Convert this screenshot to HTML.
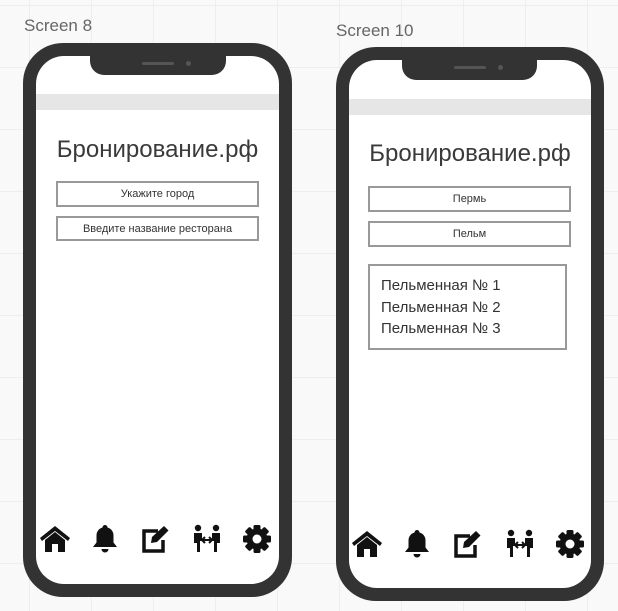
<!DOCTYPE html>
<html><head><meta charset="utf-8"><style>
body{margin:0;width:618px;height:611px;overflow:hidden;background:#f9f9f9;position:relative;font-family:"Liberation Sans","Noto Sans CJK SC",sans-serif;
background-image:linear-gradient(#eeeeee 1px,transparent 1px),linear-gradient(90deg,#eeeeee 1px,transparent 1px);background-size:62px 62px;background-position:29px 5px}
.lbl{position:absolute;font-size:17px;color:#666}
.ph{position:absolute;background:#333;border-radius:40px}
.sc{position:absolute;background:#fff;border-radius:28px;overflow:hidden}
.notch{position:absolute;background:#333;border-radius:0 0 14px 14px;top:0}
.bar{position:absolute;left:0;right:0;height:16px;background:#e6e6e6}
.t{position:absolute;left:0;right:0;text-align:center;font-size:24px;color:#3a3a3a}
.b{position:absolute;border:2px solid #999;box-sizing:border-box;font-size:11px;color:#333;text-align:center;line-height:22px}
.lst{position:absolute;border:2px solid #999;box-sizing:border-box;font-size:15px;color:#333;padding:9px 0 0 11px;line-height:21.5px}
.ic{position:absolute;width:32px;height:32px}
</style></head><body>
<div class="lbl" style="left:24px;top:16px">Screen 8</div>
<div class="lbl" style="left:336px;top:21px">Screen 10</div>

<div class="ph" style="left:23px;top:43px;width:269px;height:554px"></div>
<div class="sc" style="left:36px;top:56px;width:243px;height:528px">
 <div class="notch" style="left:54px;width:136px;height:19px"><div style="position:absolute;left:52px;top:6px;width:32px;height:3px;background:#555;border-radius:2px"></div><div style="position:absolute;left:96px;top:5px;width:5px;height:5px;background:#555;border-radius:50%"></div></div>
 <div class="bar" style="top:38px"></div>
 <div class="t" style="top:80px">Бронирование.рф</div>
 <div class="b" style="left:20px;top:125px;width:203px;height:26px">Укажите город</div>
 <div class="b" style="left:20px;top:160px;width:203px;height:25px">Введите название ресторана</div>
</div>

<div class="ph" style="left:336px;top:47px;width:268px;height:554px"></div>
<div class="sc" style="left:349px;top:60px;width:242px;height:528px">
 <div class="notch" style="left:53px;width:135px;height:20px"><div style="position:absolute;left:52px;top:6px;width:32px;height:3px;background:#555;border-radius:2px"></div><div style="position:absolute;left:96px;top:5px;width:5px;height:5px;background:#555;border-radius:50%"></div></div>
 <div class="bar" style="top:39px"></div>
 <div class="t" style="top:80px">Бронирование.рф</div>
 <div class="b" style="left:19px;top:126px;width:203px;height:26px">Пермь</div>
 <div class="b" style="left:19px;top:161px;width:203px;height:26px">Пельм</div>
 <div class="lst" style="left:19px;top:204px;width:199px;height:86px">Пельменная № 1<br>Пельменная № 2<br>Пельменная № 3</div>
</div>

<svg width="0" height="0" style="position:absolute"><defs>
<g id="home"><path d="M1 15 L16 3 L31 15 L29 18 L16 8 L3 18Z M6 17 L16 9 L26 17 V29 H19 V21 H13 V29 H6Z" fill="#111"/></g>
<g id="bell"><path d="M16 2a2.5 2.5 0 0 1 2.5 2.5 a8 8 0 0 1 6 8 v7 l3.5 4.5 H4 l3.5-4.5 v-7 a8 8 0 0 1 6-8 a2.5 2.5 0 0 1 2.5-2.5Z M12.5 26 h7 a3.5 3.5 0 0 1-7 0Z" fill="#111"/></g>
<g id="edit"><path d="M19 8 H5 V28 H24 V17" fill="none" stroke="#111" stroke-width="3.5"/><path d="M25 3 L29.5 7.5 L18 19 L12 20 L13 14Z" fill="#111"/></g>
<g id="ppl"><circle cx="7" cy="5" r="3.2" fill="#111"/><circle cx="25" cy="5" r="3.2" fill="#111"/><path d="M3 10h8v8h-2v11h-3v-9h-3Z M29 10h-8v8h2v11h3v-9h3Z" fill="#111"/><path d="M11 17h10 M11 17l3-3 M11 17l3 3 M21 17l-3-3 M21 17l-3 3" stroke="#111" stroke-width="2" fill="none"/></g>
<g id="gear"><g fill="#111"><rect x="12.5" y="2" width="7" height="28" rx="1.5"/><rect x="12.5" y="2" width="7" height="28" rx="1.5" transform="rotate(45 16 16)"/><rect x="12.5" y="2" width="7" height="28" rx="1.5" transform="rotate(90 16 16)"/><rect x="12.5" y="2" width="7" height="28" rx="1.5" transform="rotate(135 16 16)"/><circle cx="16" cy="16" r="10.5"/></g><circle cx="16" cy="16" r="4.5" fill="#fff"/></g>
</defs></svg>
<svg class="ic" style="left:39px;top:523px"><use href="#home"/></svg>
<svg class="ic" style="left:89px;top:523px"><use href="#bell"/></svg>
<svg class="ic" style="left:139px;top:523px"><use href="#edit"/></svg>
<svg class="ic" style="left:191px;top:523px"><use href="#ppl"/></svg>
<svg class="ic" style="left:241px;top:523px"><use href="#gear"/></svg>
<svg class="ic" style="left:351px;top:528px"><use href="#home"/></svg>
<svg class="ic" style="left:401px;top:528px"><use href="#bell"/></svg>
<svg class="ic" style="left:451px;top:528px"><use href="#edit"/></svg>
<svg class="ic" style="left:504px;top:528px"><use href="#ppl"/></svg>
<svg class="ic" style="left:554px;top:528px"><use href="#gear"/></svg>
</body></html>
